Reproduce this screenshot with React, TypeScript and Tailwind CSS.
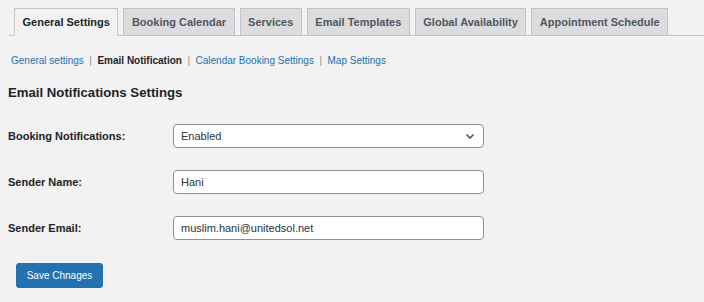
import React from "react";

const tabs = [
  "General Settings",
  "Booking Calendar",
  "Services",
  "Email Templates",
  "Global Availability",
  "Appointment Schedule",
];

const subLinks = [
  { label: "General settings", active: false },
  { label: "Email Notification", active: true },
  { label: "Calendar Booking Settings", active: false },
  { label: "Map Settings", active: false },
];

const Row: React.FC<{ label: string; children: React.ReactNode }> = ({ label, children }) => (
  <div className="flex items-center h-[24px] mb-[22px]">
    <label className="w-[165px] text-[11px] font-bold text-[#1d2327]">{label}</label>
    {children}
  </div>
);

export default function App() {
  return (
    <div
      className="w-[704px] h-[302px] bg-[#f2f2f2] overflow-hidden"
      style={{ fontFamily: '"Liberation Sans", Arial, sans-serif' }}
    >
      {/* tabs */}
      <div className="ml-[9px] pt-[8px] flex items-end border-b border-[#c3c4c7]">
        {tabs.map((t, i) => (
          <div
            key={t}
            className={
              i === 0
                ? "ml-[5px] -mb-px h-[28px] px-[7.5px] flex items-center border border-[#c3c4c7] border-b-[#f2f2f2] bg-[#f2f2f2] text-[11px] font-bold text-[#1d2327]"
                : "ml-[5px] -mb-px h-[28px] px-[7.5px] flex items-center border border-[#c3c4c7] bg-[#dcdcde] text-[11px] font-bold text-[#50575e]"
            }
          >
            {t}
          </div>
        ))}
      </div>

      {/* sub nav */}
      <div className="mt-[19px] ml-[11px] flex items-center text-[10px] leading-[12px]">
        {subLinks.map((l, i) => (
          <React.Fragment key={l.label}>
            {i > 0 && <span className="mx-[5.5px] text-[#8c8f94]">|</span>}
            <span className={l.active ? "font-bold text-[#1d2327]" : "text-[#2271b1]"}>{l.label}</span>
          </React.Fragment>
        ))}
      </div>

      <div className="px-[8px]">
        <h2 className="mt-[18px] text-[13.2px] leading-[16px] font-bold text-[#1d2327]">
          Email Notifications Settings
        </h2>

        <div className="mt-[23px]">
          <Row label="Booking Notifications:">
            <div className="relative w-[311px] h-[24px] bg-white border border-[#8c8f94] rounded-[4px] flex items-center pl-[7px] text-[11px] text-[#2c3338]">
              Enabled
              <svg
                className="absolute right-[8px] top-[8px]"
                width="10"
                height="7"
                viewBox="0 0 10 7"
                fill="none"
              >
                <path d="M1.5 1.5 L5 5 L8.5 1.5" stroke="#50575e" strokeWidth="1.6" />
              </svg>
            </div>
          </Row>
          <Row label="Sender Name:">
            <div className="w-[311px] h-[24px] bg-white border border-[#8c8f94] rounded-[4px] flex items-center pl-[7px] text-[11px] text-[#2c3338]">
              Hani
            </div>
          </Row>
          <Row label="Sender Email:">
            <div className="w-[311px] h-[24px] bg-white border border-[#8c8f94] rounded-[4px] flex items-center pl-[7px] text-[11px] text-[#2c3338]">
              muslim.hani@unitedsol.net
            </div>
          </Row>
        </div>

        <button className="mt-px ml-[8px] w-[87px] h-[25px] bg-[#2271b1] border border-[#2271b1] rounded-[3px] text-white text-[10px]">
          Save Chnages
        </button>
      </div>
    </div>
  );
}
